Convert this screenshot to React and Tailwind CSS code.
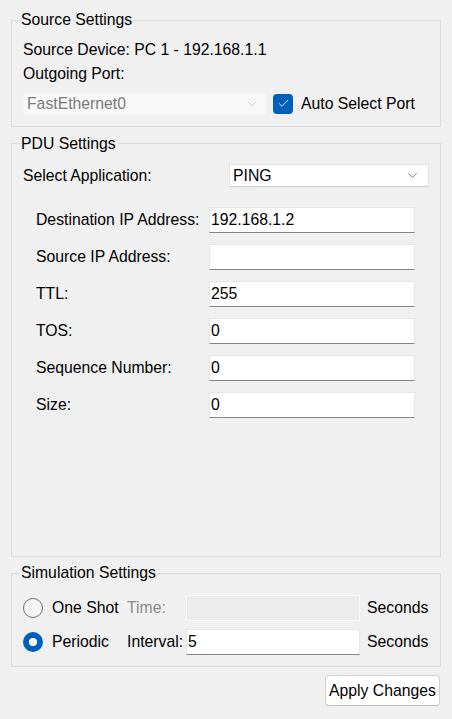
import { Check, ChevronDown } from 'lucide-react'

const fields = [
  ['Destination IP Address:', '192.168.1.2'],
  ['Source IP Address:', ''],
  ['TTL:', '255'],
  ['TOS:', '0'],
  ['Sequence Number:', '0'],
  ['Size:', '0'],
]

function Group({ title, className = '', children }) {
  return (
    <fieldset className={`border border-[#dcdcdc] px-[11px] ${className}`}>
      <legend className="ml-[-3px] px-[1px] leading-[18px]">{title}</legend>
      {children}
    </fieldset>
  )
}

function TextBox({ value, disabled }) {
  if (disabled) {
    return <div className="h-[26px] border border-[#fafafa] bg-[#ececec]" />
  }
  return (
    <div className="flex h-[26px] items-center border border-[#e6e6e6] border-b-[#858585] bg-white pl-[1px] leading-none">
      {value}
    </div>
  )
}

function Radio({ checked }) {
  if (checked) {
    return (
      <span className="flex h-[20px] w-[20px] items-center justify-center rounded-full bg-[#005fb8]">
        <span className="h-[8px] w-[8px] rounded-full bg-white" />
      </span>
    )
  }
  return <span className="h-[20px] w-[20px] rounded-full border border-[#6f6f6f] bg-[#f5f5f5]" />
}

export default function App() {
  return (
    <div
      className="flex h-[719px] w-[452px] flex-col bg-[#f0f0f0] px-[11px] pt-[11px] text-[15.75px] text-black"
      style={{ fontFamily: '"Liberation Sans", Arial, sans-serif' }}
    >
      <Group title="Source Settings" className="pb-[10px]">
        <div className="mt-[12px] leading-[18px]">Source Device: PC 1 - 192.168.1.1</div>
        <div className="mt-[6px] leading-[18px]">Outgoing Port:</div>
        <div className="mt-[9px] flex items-center">
          <div className="flex h-[22px] w-[243px] items-center justify-between border border-[#f4f4f4] bg-[#f8f8f8] pl-[3px] pr-[6px] text-[#7a7a7a]">
            <span>FastEthernet0</span>
            <ChevronDown size={14} strokeWidth={1.2} className="text-[#b8b8b8]" />
          </div>
          <span className="ml-[7px] flex h-[20px] w-[20px] items-center justify-center rounded-[4px] bg-[#005fb8]">
            <Check size={13} strokeWidth={1.6} className="text-white" />
          </span>
          <span className="ml-[8px]">Auto Select Port</span>
        </div>
      </Group>

      <Group title="PDU Settings" className="mt-[8px] flex-1">
        <div className="mt-[11px] flex items-center">
          <span className="w-[206px]">Select Application:</span>
          <div className="flex h-[23px] w-[200px] items-center justify-between border border-[#e2e2e2] border-b-[#cdcdcd] bg-white pl-[3px] pr-[8px]">
            <span>PING</span>
            <ChevronDown size={15} strokeWidth={1.3} className="text-[#5a5a5a]" />
          </div>
        </div>
        <div className="mt-[20px] flex flex-col gap-[11px] pl-[13px]">
          {fields.map(([label, value]) => (
            <div key={label} className="flex items-center">
              <span className="w-[173px]">{label}</span>
              <div className="w-[206px]">
                <TextBox value={value} />
              </div>
            </div>
          ))}
        </div>
      </Group>

      <Group title="Simulation Settings" className="mt-[7px] pb-[11px]">
        <div className="mt-[13px] grid grid-cols-[104px_59px_174px_auto] items-center gap-y-[8px]">
          <div className="flex items-center gap-[9px]">
            <Radio />
            <span>One Shot</span>
          </div>
          <span className="text-[#8a8a8a]">Time:</span>
          <TextBox disabled />
          <span className="pl-[7px]">Seconds</span>

          <div className="flex items-center gap-[9px]">
            <Radio checked />
            <span>Periodic</span>
          </div>
          <span>Interval:</span>
          <TextBox value="5" />
          <span className="pl-[7px]">Seconds</span>
        </div>
      </Group>

      <div className="mb-[13px] mt-[8px] flex justify-end pr-[1px]">
        <button className="h-[31px] w-[115px] rounded-[4px] border border-[#d0d0d0] border-b-[#bdbdbd] bg-white">
          Apply Changes
        </button>
      </div>
    </div>
  )
}
